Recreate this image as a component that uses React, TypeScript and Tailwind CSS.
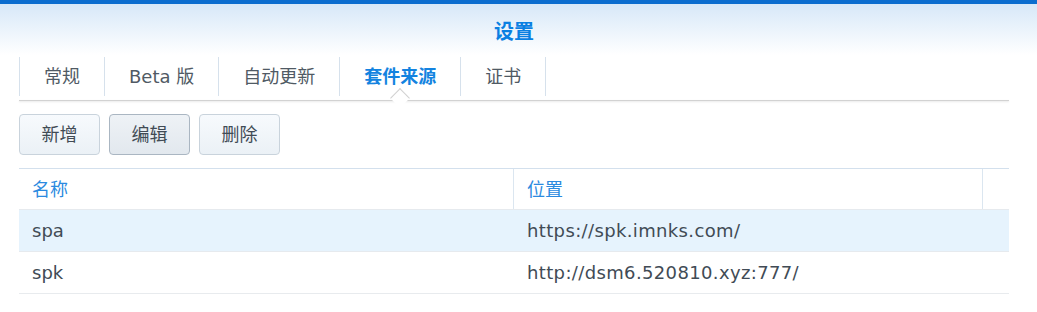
import React from "react";

const tabs = ["常规", "Beta 版", "自动更新", "套件来源", "证书"];
const active = "套件来源";

const rows = [
  { name: "spa", url: "https://spk.imnks.com/", selected: true },
  { name: "spk", url: "http://dsm6.520810.xyz:777/", selected: false },
];

export default function App() {
  return (
    <div className="w-[1037px] h-[312px] bg-white overflow-hidden font-['DejaVu_Sans','Noto_Sans_CJK_SC',sans-serif] text-[#414b55]">
      {/* window top */}
      <div className="h-[4px] bg-[#0b6dcf]" />
      <div className="h-[51px] bg-gradient-to-b from-[#d7e8f8] to-white flex items-center justify-center pt-[5px] pr-[9px]">
        <span className="text-[20px] font-bold text-[#0a80e2]">设置</span>
      </div>

      {/* tabs */}
      <div className="mx-[19px] w-[990px]">
        <div className="flex h-[45px] pt-[2px]">
          {tabs.map((t, i) => (
            <div
              key={t}
              className={`relative h-[39px] flex items-center px-[24px] border-l border-[#d6e1ec] text-[18px] ${
                i === tabs.length - 1 ? "border-r" : ""
              } ${t === active ? "font-bold text-[#1383e0]" : "text-[#505a64]"}`}
            >
              {t}
              {t === active && (
                <span className="absolute left-1/2 -bottom-[9px] -ml-[7px] w-[14px] h-[14px] rotate-45 bg-white border-l border-t border-[#d0d0d0] z-10" />
              )}
            </div>
          ))}
        </div>
        <div className="h-[1px] bg-[#d2d2d2] shadow-[0_1px_2px_rgba(0,0,0,0.12)]" />

        {/* toolbar */}
        <div className="flex gap-[9px] mt-[13px]">
          {["新增", "编辑", "删除"].map((b) => (
            <button
              key={b}
              className={`w-[81px] h-[41px] rounded-[4px] border text-[18px] text-[#414b55] ${
                b === "编辑"
                  ? "border-[#aab6c2] bg-gradient-to-b from-[#eef2f6] to-[#e2e8ee]"
                  : "border-[#c9d3dc] bg-gradient-to-b from-[#f7fafd] to-[#ebf1f6]"
              }`}
            >
              {b}
            </button>
          ))}
        </div>

        {/* grid */}
        <div className="mt-[13px]">
          <div className="flex h-[41px] border-t border-[#d3e0ed] text-[18px] text-[#2b8ae0]">
            <div className="w-[495px] flex items-center pl-[13px] border-r border-[#dbe6f0]">名称</div>
            <div className="w-[469px] flex items-center pl-[13px] border-r border-[#dbe6f0]">位置</div>
            <div className="flex-1" />
          </div>
          {rows.map((r) => (
            <div
              key={r.name}
              className={`flex h-[42px] border-t border-[#e6eaee] text-[18px] ${
                r.selected ? "bg-[#e6f3fd] border-[#e1edf7]" : ""
              }`}
            >
              <div className="w-[495px] flex items-center pl-[13px]">{r.name}</div>
              <div className="w-[469px] flex items-center pl-[13px] tracking-[0.36px]">{r.url}</div>
              <div className="flex-1" />
            </div>
          ))}
          <div className="h-[1px] bg-[#e8ebee]" />
        </div>
      </div>
    </div>
  );
}
